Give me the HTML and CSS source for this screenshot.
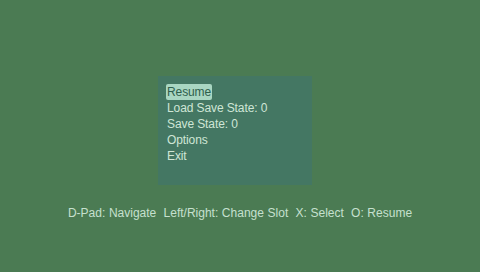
FILE: index.html
```html
<!DOCTYPE html>
<html lang="en">

<head>
    <meta charset="UTF-8">
    <meta name="viewport" content="width=device-width, initial-scale=1.0">
    <link rel="stylesheet" href="styles.css">
</head>

<body>

    <div class="screen">
        <div class="menu">
            <div class="item selected">Resume</div>
            <div class="item">Load Save State: 0</div>
            <div class="item">Save State: 0</div>
            <div class="item">Options</div>
            <div class="item">Exit</div>
        </div>

        <div class="hints">D-Pad: Navigate&nbsp; Left/Right: Change Slot&nbsp; X: Select&nbsp; O: Resume</div>
    </div>

</body>

</html>
```

FILE: styles.css
```css
body {
    margin: 0;
    width: 480px;
    height: 272px;
    overflow: hidden;
    background: #4b7b53;
    font-family: 'Liberation Sans', Arial, sans-serif;
    font-size: 12px;
    color: #cfe6d6;
}

.screen {
    display: flex;
    flex-direction: column;
    padding-top: 76px;
}

.menu {
    width: 154px;
    height: 109px;
    box-sizing: border-box;
    margin-left: 158px;
    padding: 8px 8px;
    background: #447763;
    display: flex;
    flex-direction: column;
    align-items: flex-start;
}

.item {
    height: 16px;
    box-sizing: border-box;
    padding: 1px 1px 0;
    line-height: 15px;
    letter-spacing: -0.1px;
}

.selected {
    background: #a9d6c2;
    color: #2f5f4c;
    border-radius: 2px;
}

.hints {
    margin-top: 20px;
    height: 16px;
    line-height: 17px;
    text-align: center;
    color: #c6e0cf;
    word-spacing: 0.3px;
}
```
